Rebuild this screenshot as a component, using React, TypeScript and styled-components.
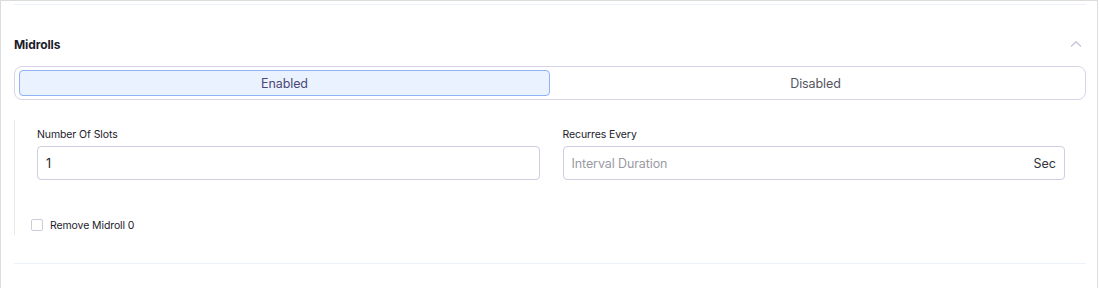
import React, { useState } from 'react';
import styled, { createGlobalStyle } from 'styled-components';

const GlobalStyle = createGlobalStyle`
  body {
    margin: 0;
    background: #ffffff;
    font-family: Inter, 'Noto Sans', sans-serif;
  }
`;

const Frame = styled.div`
  width: 1098px;
  height: 288px;
  box-sizing: border-box;
  border-top: 1px solid #dcdcdc;
  border-left: 1px solid #dcdcdc;
  border-right: 1px solid #dcdcdc;
  padding: 3px 11px 0 13px;
`;

const Divider = styled.div`
  height: 1px;
  background: #edf1f9;
`;

const Header = styled.div`
  display: flex;
  align-items: center;
  justify-content: space-between;
  height: 28px;
  margin-top: 25px;
`;

const Title = styled.h3`
  margin: 0;
  font-size: 12px;
  font-weight: 700;
  color: #1d1d2b;
  letter-spacing: -0.1px;
`;

const Chevron = styled.svg`
  width: 14px;
  height: 14px;
  margin-right: 3px;
`;

const ToggleGroup = styled.div`
  display: flex;
  margin-top: 8px;
  padding: 3px 4px;
  border: 1px solid #d6d4e6;
  border-radius: 8px;
`;

const ToggleButton = styled.button<{ active: boolean }>`
  flex: 1;
  height: 26px;
  border: 1px solid ${p => (p.active ? '#90b2f6' : 'transparent')};
  border-radius: 4px;
  background: ${p => (p.active ? '#eaf1ff' : 'transparent')};
  color: ${p => (p.active ? '#4a4878' : '#555560')};
  font-family: Inter, 'Noto Sans', sans-serif;
  font-size: 12.5px;
  letter-spacing: -0.1px;
  cursor: pointer;
  padding: 0;
`;

const Body = styled.div`
  margin-top: 20px;
  border-left: 1px solid #e8e8ef;
  padding: 8px 21px 2px 22px;
`;

const Fields = styled.div`
  display: grid;
  grid-template-columns: 1fr 1fr;
  column-gap: 23px;
`;

const Field = styled.div`
  display: flex;
  flex-direction: column;
`;

const Label = styled.label`
  font-size: 10.5px;
  line-height: 14px;
  letter-spacing: -0.1px;
  color: #22222c;
  margin-bottom: 4px;
`;

const InputBox = styled.div`
  display: flex;
  align-items: center;
  height: 34px;
  box-sizing: border-box;
  border: 1px solid #cfcde1;
  border-radius: 4px;
  padding: 0 8px 0 8px;
`;

const Input = styled.input`
  flex: 1;
  border: none;
  outline: none;
  background: transparent;
  font-family: Inter, 'Noto Sans', sans-serif;
  font-size: 12.5px;
  letter-spacing: -0.1px;
  color: #26262e;
  padding: 0;
  &::placeholder {
    color: #9a9aa3;
  }
`;

const Suffix = styled.span`
  font-size: 12.5px;
  color: #33333b;
`;

const CheckRow = styled.label`
  display: flex;
  align-items: center;
  gap: 7px;
  margin: 37px 0 0 -6px;
  font-size: 10.5px;
  letter-spacing: -0.1px;
  color: #22222c;
  height: 16px;
`;

const Box = styled.span`
  width: 10px;
  height: 10px;
  border: 1px solid #cccbd9;
  border-radius: 2px;
`;

const BottomDivider = styled(Divider)`
  margin-top: 28px;
`;

export default function App() {
  const [enabled, setEnabled] = useState(true);
  return (
    <>
      <GlobalStyle />
      <Frame>
        <Divider />
        <Header>
          <Title>Midrolls</Title>
          <Chevron viewBox="0 0 14 14" fill="none">
            <path d="M2.5 9L7 4.8L11.5 9" stroke="#c6c4d8" strokeWidth="1.4" strokeLinecap="round" strokeLinejoin="round" />
          </Chevron>
        </Header>
        <ToggleGroup>
          <ToggleButton active={enabled} onClick={() => setEnabled(true)}>Enabled</ToggleButton>
          <ToggleButton active={!enabled} onClick={() => setEnabled(false)}>Disabled</ToggleButton>
        </ToggleGroup>
        <Body>
          <Fields>
            <Field>
              <Label>Number Of Slots</Label>
              <InputBox>
                <Input defaultValue="1" />
              </InputBox>
            </Field>
            <Field>
              <Label>Recurres Every</Label>
              <InputBox>
                <Input placeholder="Interval Duration" />
                <Suffix>Sec</Suffix>
              </InputBox>
            </Field>
          </Fields>
          <CheckRow>
            <Box />
            Remove Midroll 0
          </CheckRow>
        </Body>
        <BottomDivider />
      </Frame>
    </>
  );
}
